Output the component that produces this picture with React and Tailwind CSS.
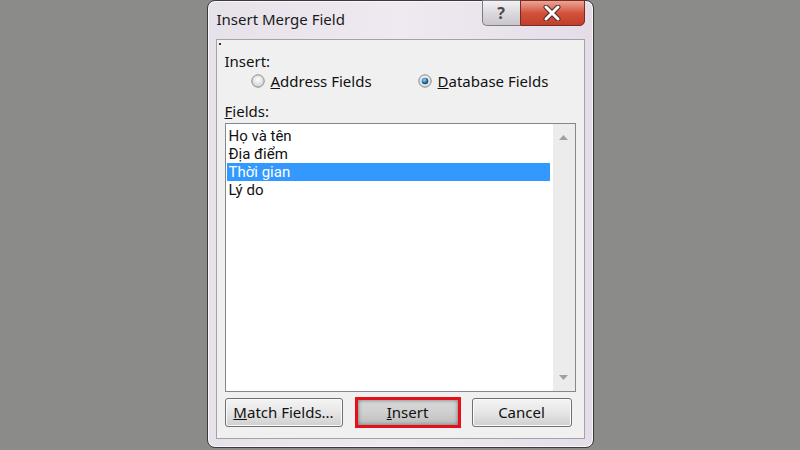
import React from 'react';

const font = { fontFamily: '"Noto Sans", "Open Sans", sans-serif' };
const listFont = { fontFamily: 'Roboto, "Noto Sans", sans-serif' };

function Radio({ checked }) {
  return (
    <svg width="14" height="14" viewBox="0 0 14 14" className="shrink-0">
      <defs>
        <radialGradient id={checked ? 'rgOn' : 'rgOff'} cx="50%" cy="40%" r="60%">
          <stop offset="0%" stopColor="#ffffff" />
          <stop offset="100%" stopColor={checked ? '#c9d7e3' : '#cfcfcf'} />
        </radialGradient>
        <radialGradient id="dot" cx="40%" cy="35%" r="70%">
          <stop offset="0%" stopColor="#9fd7f5" />
          <stop offset="60%" stopColor="#2a6f9a" />
          <stop offset="100%" stopColor="#123a55" />
        </radialGradient>
      </defs>
      <circle cx="7" cy="7" r="6.2" fill={`url(#${checked ? 'rgOn' : 'rgOff'})`} stroke="#8a8a8a" strokeWidth="1" />
      {checked && <circle cx="7" cy="7" r="3.3" fill="url(#dot)" />}
    </svg>
  );
}

function Btn({ children, className = '' }) {
  return (
    <div className={`h-[29px] flex items-center justify-center rounded-[3px] border border-[#707070] bg-gradient-to-b from-[#f4f4f4] via-[#e6e6e6] to-[#cfcfcf] text-[15px] text-[#111] shadow-[inset_0_0_0_1px_#fbfbfb] ${className}`}>
      {children}
    </div>
  );
}

export default function App() {
  const items = ['Họ và tên', 'Địa điểm', 'Thời gian', 'Lý do'];

  return (
    <div className="w-[800px] h-[450px] bg-[#8b8b89] flex justify-center overflow-hidden" style={font}>
      <div className="w-[387px] h-[448px] rounded-[8px] border border-[#3a3a3a] bg-gradient-to-r from-[#e7e2ea] via-[#efeaf1] to-[#e4dde8] flex flex-col px-[8px] pb-[8px] shadow-[inset_0_0_0_1px_#f8f6f9]">
        {/* title bar */}
        <div className="h-[39px] flex items-start">
          <div className="pt-[7px] pl-[1px] text-[15px] text-[#1a1a1a] flex-1">Insert Merge Field</div>
          <div className="flex h-[26px] mt-[-1px]">
            <div className="w-[38px] flex items-center justify-center rounded-bl-[5px] border border-[#7b7b80] border-r-0 bg-gradient-to-b from-[#f3f1f4] via-[#dcd9de] to-[#c9c5cc] text-[#4a4a4a] text-[16px] font-bold leading-none">
              ?
            </div>
            <div className="w-[65px] flex items-center justify-center rounded-br-[5px] border border-[#7a2a20] bg-gradient-to-b from-[#e9a597] via-[#d2513b] to-[#c0402c]">
              <svg width="20" height="16" viewBox="0 0 20 16">
                <path d="M4 2 L16 14 M16 2 L4 14" stroke="#4a2a2a" strokeWidth="5" strokeLinecap="round" />
                <path d="M4 2 L16 14 M16 2 L4 14" stroke="#ffffff" strokeWidth="3" strokeLinecap="round" />
              </svg>
            </div>
          </div>
        </div>

        {/* client area */}
        <div className="flex-1 border border-[#a3a3a3] bg-[#f0f0f0] flex flex-col px-[8px] pb-[10px] text-[15px] text-[#111] relative">
          <div className="absolute left-[2px] top-[3px] w-[2px] h-[2px] bg-[#333]" />
          <div className="h-[20px] mt-[11px] leading-[20px]">Insert:</div>
          <div className="h-[20px] flex items-center">
            <div className="flex items-center gap-[6px] ml-[26px]">
              <Radio checked={false} />
              <span><span className="underline">A</span>ddress Fields</span>
            </div>
            <div className="flex items-center gap-[6px] ml-[46px]">
              <Radio checked />
              <span><span className="underline">D</span>atabase Fields</span>
            </div>
          </div>
          <div className="h-[20px] mt-[10px] leading-[20px]"><span className="underline">F</span>ields:</div>

          {/* list box */}
          <div className="mt-[2px] h-[269px] border border-[#828790] bg-white flex">
            <div className="flex-1 pt-[3px] pl-[1px] pr-[3px]" style={listFont}>
              {items.map((it, i) => (
                <div
                  key={it}
                  className={`h-[18px] leading-[18px] pl-[2px] text-[15px] ${i === 2 ? 'bg-[#3399ff] text-white' : 'text-[#111]'}`}
                >
                  {it}
                </div>
              ))}
            </div>
            <div className="w-[22px] bg-[#ececec] flex flex-col justify-between items-center py-[11px]">
              <svg width="9" height="5" viewBox="0 0 9 5"><path d="M0 5 L4.5 0 L9 5 Z" fill="#a0a0a0" /></svg>
              <svg width="9" height="5" viewBox="0 0 9 5"><path d="M0 0 L4.5 5 L9 0 Z" fill="#a0a0a0" /></svg>
            </div>
          </div>

          {/* buttons */}
          <div className="mt-[5px] flex items-center">
            <Btn className="w-[118px]"><span><span className="underline">M</span>atch Fields...</span></Btn>
            <div className="ml-[12px] w-[106px] h-[31px] border-[3px] border-[#e3121a] flex">
              <div className="flex-1 flex items-center justify-center bg-gradient-to-b from-[#d9d9d9] via-[#cfcfcf] to-[#bdbdbd] shadow-[inset_0_0_4px_#6f6f6f] text-[15px] text-[#111]">
                <span><span className="underline">I</span>nsert</span>
              </div>
            </div>
            <Btn className="ml-[11px] w-[100px]">Cancel</Btn>
          </div>
        </div>
      </div>
    </div>
  );
}
